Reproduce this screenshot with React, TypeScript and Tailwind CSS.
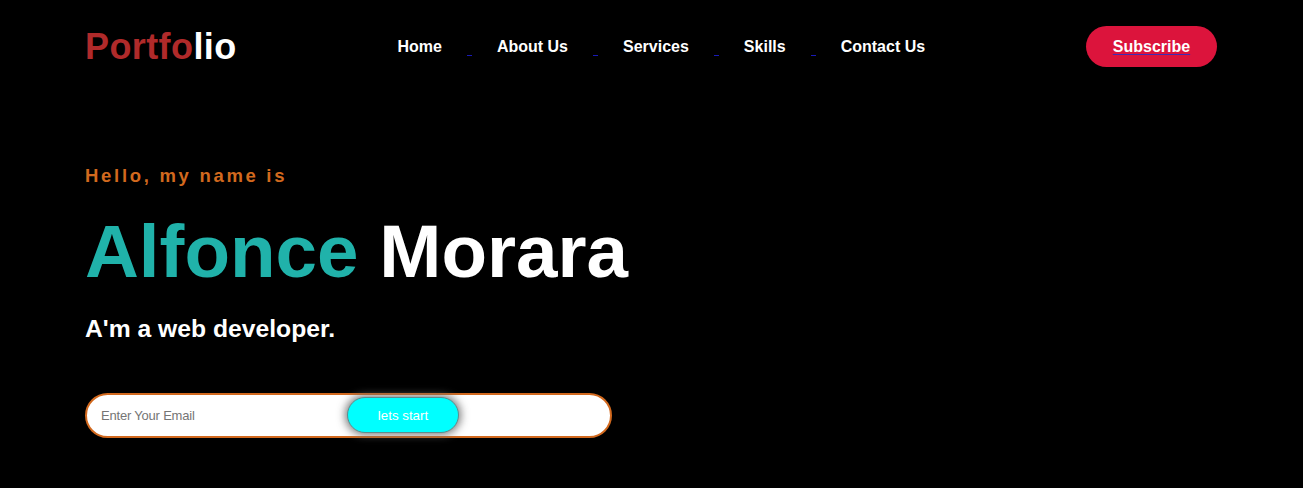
const navItems = [
  { id: 1, text: "Home" },
  { id: 2, text: "About Us" },
  { id: 3, text: "Services" },
  { id: 4, text: "Skills" },
  { id: 5, text: "Contact Us" },
];

const App = () => {
  return (
    <div className="min-h-screen bg-black font-['Liberation_Sans',Arial,sans-serif] text-white">
      {/* Header */}
      <header className="flex h-[93px] items-center justify-between pl-[85px] pr-[86px]">
        <div className="text-[36px] font-bold leading-none tracking-[0.4px]">
          <span className="text-[#b02a2a]">Portfo</span>
          <span className="text-white">lio</span>
        </div>
        <ul className="flex items-center gap-[25px]">
          {navItems.map((item, i) => (
            <li key={item.id} className="flex items-center gap-[25px]">
              {i > 0 && <span className="mt-[17px] h-px w-[5px] bg-[#1a1ab8]" />}
              <a className="text-[16px] font-bold leading-none text-white">{item.text}</a>
            </li>
          ))}
        </ul>
        <button className="flex h-[41px] w-[131px] items-center justify-center rounded-full bg-[#dc143c] text-[16px] font-bold leading-none text-white underline decoration-[#3d2db5] underline-offset-2">
          Subscribe
        </button>
      </header>

      {/* Hero */}
      <section className="flex flex-col items-start px-[85px] pt-[74px]">
        <p className="text-[18.5px] font-bold leading-none tracking-[2.7px] text-[#d2691e]">
          Hello, my name is
        </p>
        <h1 className="mt-[28px] text-[74.6px] font-bold leading-none">
          <span className="text-[#20b2aa]">Alfonce</span> <span className="text-white">Morara</span>
        </h1>
        <h2 className="mt-[29px] text-[24.7px] font-bold leading-none text-white">
          A'm a web developer.
        </h2>
        <form className="mt-[51px] flex h-[45px] w-[527px] items-center rounded-full border-2 border-[#d2691e] bg-white pl-[14px]">
          <input
            type="email"
            placeholder="Enter Your Email"
            className="w-[246px] bg-transparent text-[13px] tracking-[-0.2px] text-black outline-none placeholder:text-[#757575]"
          />
          <button
            type="button"
            className="flex h-[36px] w-[112px] items-center justify-center rounded-full border border-[#5e8c8c] bg-[#00ffff] text-[13.33px] leading-none text-white shadow-[0_0_8px_2px_rgba(110,110,110,0.9)]"
          >
            lets start
          </button>
        </form>
      </section>
    </div>
  );
};

export default App;
